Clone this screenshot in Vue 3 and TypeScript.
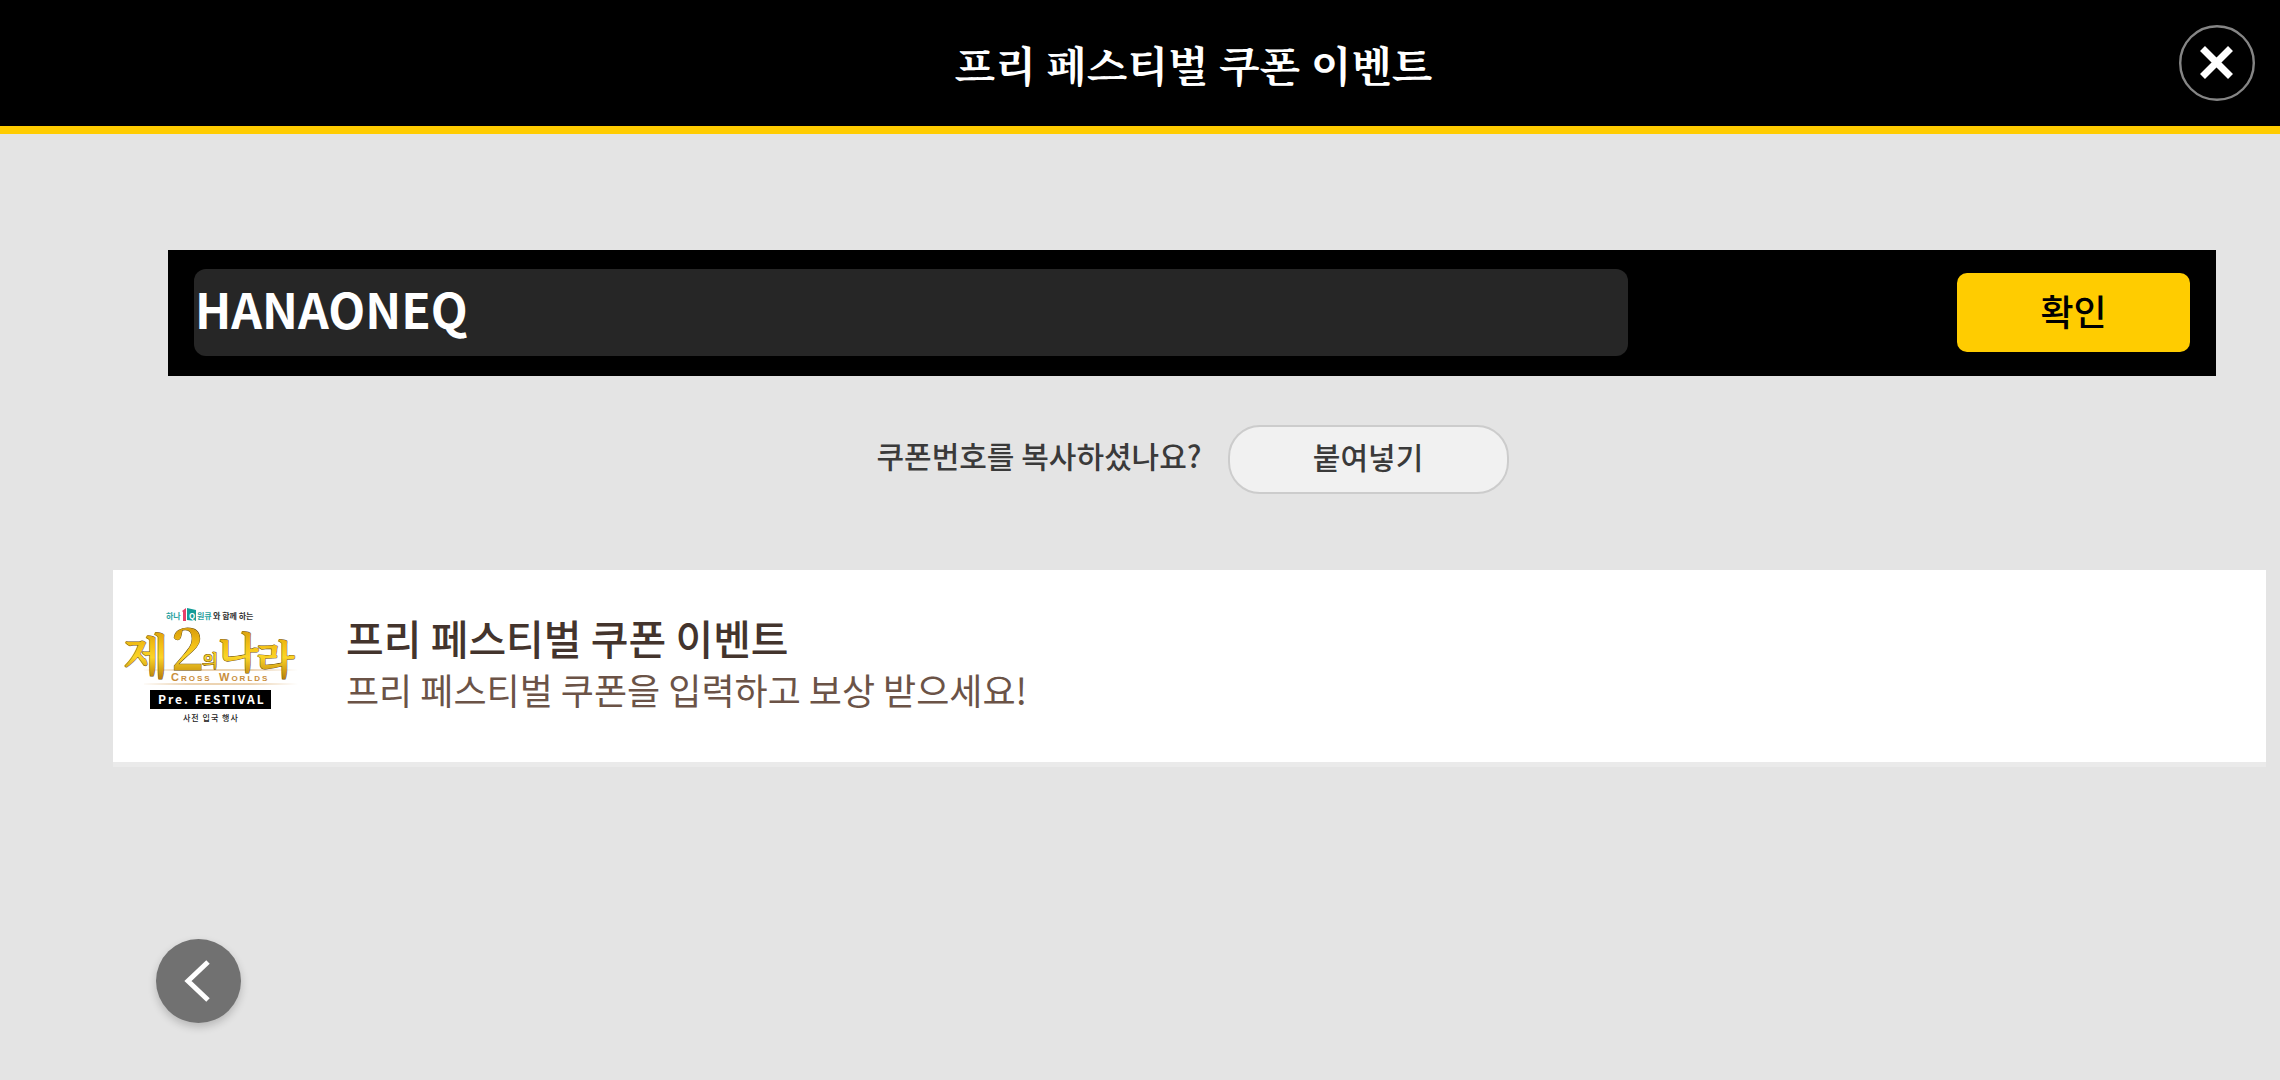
<script setup lang="ts">
import { ref } from 'vue'

const title = '프리 페스티벌 쿠폰 이벤트'
const code = ref('HANAONEQ')

async function paste(): Promise<void> {
  code.value = await navigator.clipboard.readText()
}
</script>

<template>
  <div class="page">
    <header class="bar">
      <h1>{{ title }}</h1>
      <button class="close" type="button" aria-label="닫기">
        <svg viewBox="0 0 76 76" fill="none">
          <circle cx="38" cy="38" r="36.800" stroke="#858585" stroke-width="2.400" />
          <path d="M23.500 23.500 51.500 51.500M51.500 23.500 23.500 51.500" stroke="#fff" stroke-width="7" />
        </svg>
      </button>
    </header>

    <main>
      <form class="coupon" @submit.prevent>
        <input v-model="code" type="text" aria-label="쿠폰번호" spellcheck="false" />
        <button type="submit">확인</button>
      </form>

      <div class="paste">
        <span>쿠폰번호를 복사하셨나요?</span>
        <button type="button" @click="paste">붙여넣기</button>
      </div>

      <article class="card">
        <svg class="logo" viewBox="0 0 180 120" role="img" aria-label="제2의 나라">
          <defs>
            <linearGradient id="gold" gradientUnits="userSpaceOnUse" x1="0" y1="24" x2="0" y2="74">
              <stop offset="0" stop-color="#dba00c" />
              <stop offset="0.300" stop-color="#f3c015" />
              <stop offset="0.550" stop-color="#fbd427" />
              <stop offset="1" stop-color="#b57a08" />
            </linearGradient>
            <linearGradient id="rule" gradientUnits="userSpaceOnUse" x1="20" y1="0" x2="178" y2="0">
              <stop offset="0" stop-color="#d9a866" stop-opacity="0" />
              <stop offset="0.300" stop-color="#d9a866" />
              <stop offset="0.700" stop-color="#d9a866" />
              <stop offset="1" stop-color="#d9a866" stop-opacity="0" />
            </linearGradient>
          </defs>
          <path d="M62 5l4-3v13h-3V6z" fill="#e5406b" />
          <path d="M67 2l9 2v11l-9-1z" fill="#149c97" />
          <text font-size="8" font-weight="700" y="13" fill="#2ba39f">
            <tspan x="46">하나</tspan><tspan x="69" fill="#fff">Q</tspan><tspan x="77">원큐</tspan><tspan x="93" fill="#333">와 함께 하는</tspan>
          </text>
          <path d="M24 64H178M24 78H178" stroke="url(#rule)" />
          <text class="gold" fill="url(#gold)" stroke="#6b5010" stroke-width="1" font-weight="700" paint-order="stroke">
            <tspan x="3" y="67" font-size="47">제</tspan><tspan x="51" y="64" font-size="55">2</tspan><tspan x="82" y="61" font-size="17">의</tspan><tspan x="98" y="62" font-size="42">나</tspan><tspan x="136" y="68" font-size="40">라</tspan>
          </text>
          <text class="worlds" y="75" fill="#c98e3c" font-weight="700">
            <tspan x="51" font-size="11">C</tspan><tspan font-size="8">ROSS</tspan><tspan x="99" font-size="11">W</tspan><tspan font-size="8">ORLDS</tspan>
          </text>
          <rect x="30" y="84" width="121" height="19" />
          <text class="fest" x="38" y="98" fill="#fff" font-size="12" font-weight="700">Pre. FESTIVAL</text>
          <text class="entry" x="63" y="115" fill="#222" font-size="8" font-weight="500">사전 입국 행사</text>
        </svg>
        <div class="copy">
          <h2>{{ title }}</h2>
          <p>프리 페스티벌 쿠폰을 입력하고 보상 받으세요!</p>
        </div>
      </article>
    </main>

    <footer>
      <button class="back" type="button" aria-label="뒤로">
        <svg viewBox="0 0 85 84" fill="none">
          <path d="M52 23 32 42 52 61" stroke="#fff" stroke-width="5" />
        </svg>
      </button>
    </footer>
  </div>
</template>

<style>
body {
  margin: 0;
}
</style>

<style scoped>
.page {
  box-sizing: border-box;
  min-height: 100vh;
  display: flex;
  flex-direction: column;
  background: #e4e4e4;
  color: #3a3a3a;
  font-family: "Noto Sans CJK KR", "Noto Sans", sans-serif;
  font-weight: 500;
}

button,
input {
  box-sizing: border-box;
  margin: 0;
  padding: 0;
  border: 0;
  font: inherit;
  color: inherit;
}

button {
  cursor: pointer;
}

svg {
  display: block;
}

h1,
h2,
p {
  margin: 0;
}

.bar {
  display: flex;
  align-items: center;
  height: 126px;
  padding: 0 25px 0 107px;
  border-bottom: 8px solid #ffcc00;
  background: #000;
  color: #fff;
}

h1 {
  flex: 1;
  padding: 2px 0 0 101px;
  text-align: center;
  font-family: "Noto Serif CJK KR", "Noto Sans CJK KR", serif;
  font-size: 42px;
  line-height: 60px;
  font-weight: 700;
}

.close {
  width: 76px;
  height: 76px;
  background: none;
}

main {
  padding-left: 105px;
}

.coupon {
  display: flex;
  align-items: center;
  justify-content: space-between;
  box-sizing: border-box;
  height: 126px;
  margin: 116px 64px 0 63px;
  padding: 0 26px 2px;
  background: #000;
}

.coupon input {
  flex: 0 1 1434px;
  min-width: 0;
  height: 87px;
  padding: 0 1px 8px;
  border-radius: 12px;
  background: #262626;
  color: #fff;
  font-size: 48px;
  font-weight: 700;
}

.coupon button {
  width: 233px;
  height: 79px;
  padding-bottom: 4px;
  border-radius: 10px;
  background: #ffcc00;
  color: #000;
  font-size: 36px;
}

.paste {
  display: flex;
  justify-content: center;
  align-items: center;
  gap: 26px;
  margin-top: 49px;
  font-size: 30px;
}

.paste span {
  padding-bottom: 10px;
}

.paste button {
  width: 281px;
  height: 69px;
  padding-bottom: 8px;
  border: 2px solid #ccc;
  border-radius: 32px;
  background: #f1f1f1;
}

.card {
  display: flex;
  align-items: center;
  height: 192px;
  margin: 76px 14px 0 8px;
  padding-left: 7px;
  border-bottom: 5px solid #eaeaea;
  background: #fff;
}

.logo {
  width: 180px;
  height: 120px;
}

.gold {
  font-family: "Noto Serif CJK KR", "Noto Sans CJK KR", serif;
}

.worlds {
  font-family: "Liberation Sans", sans-serif;
  letter-spacing: 2px;
}

.fest {
  letter-spacing: 2px;
}

.entry {
  letter-spacing: 1px;
}

.copy {
  margin-left: 46px;
  padding-bottom: 8px;
}

h2 {
  color: #43342d;
  font-size: 41px;
  line-height: 54px;
  font-weight: 500;
}

.copy p {
  color: #6b5347;
  font-size: 36px;
  line-height: 50px;
  font-weight: 400;
}

footer {
  margin-top: auto;
  padding: 0 156px 57px;
}

.back {
  display: block;
  width: 85px;
  height: 84px;
  border-radius: 50%;
  background: #717171;
  box-shadow: 0 4px 8px rgba(0, 0, 0, 0.2);
}
</style>
